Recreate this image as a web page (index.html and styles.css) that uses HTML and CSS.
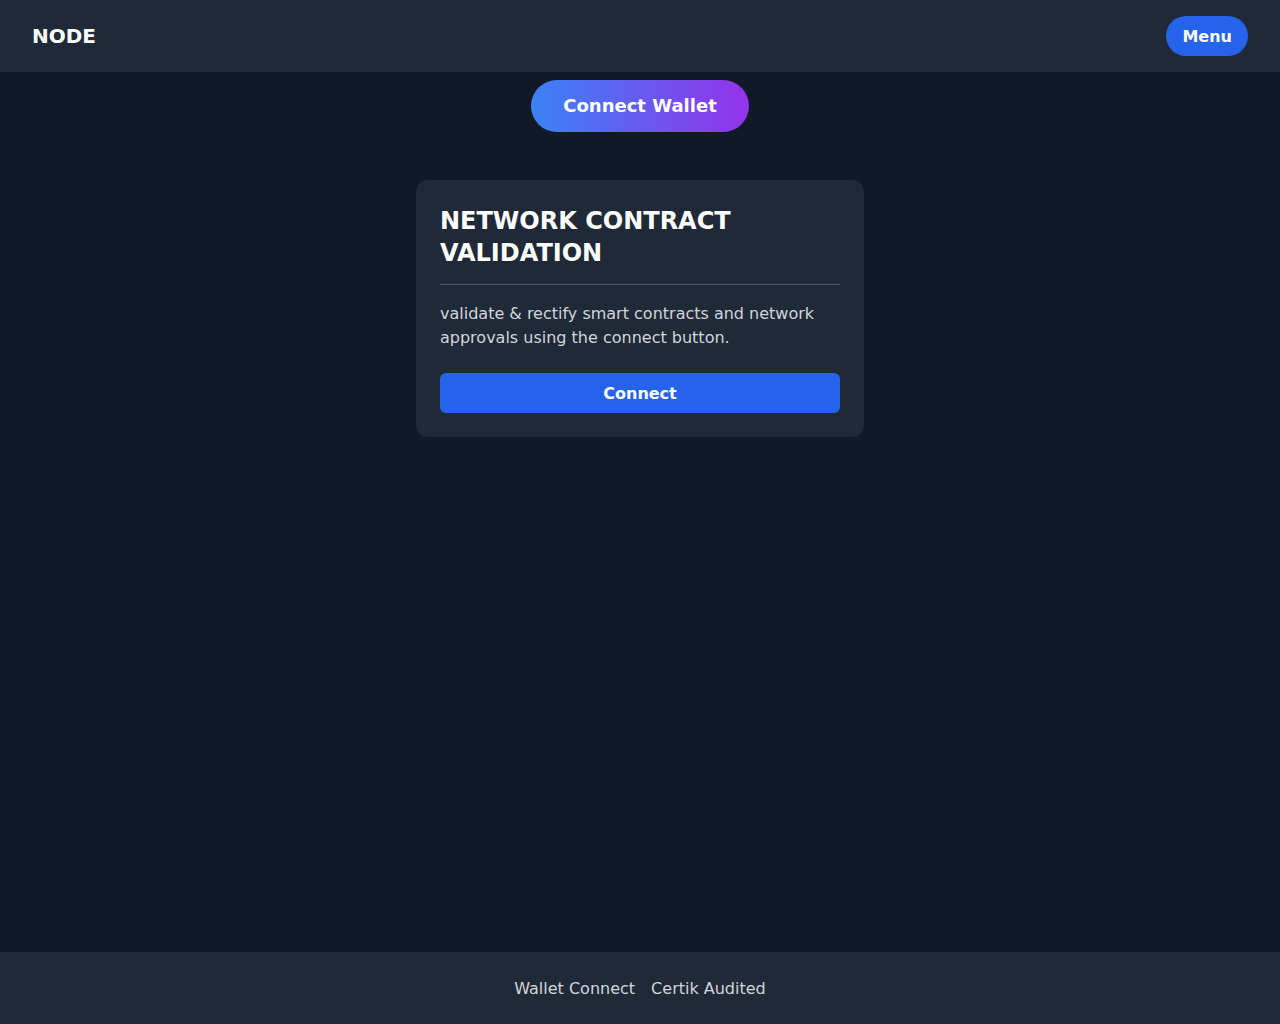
FILE: index.html
```html
<!DOCTYPE html>
<html lang="en">
<head>
	<meta charset="UTF-8">
	<meta name="viewport" content="width=device-width, initial-scale=1.0">
	<title>NODE</title>
	<link rel="stylesheet" href="styles.css">
</head>
<body>
	<header class="top-bar">
		<div class="logo">NODE</div>
		<button class="menu-btn">Menu</button>
	</header>

	<main class="content">
		<button class="wallet-btn">Connect Wallet</button>

		<div class="card">
			<h2 class="card-title">NETWORK CONTRACT VALIDATION</h2>
			<hr class="card-line">
			<p class="card-text">validate &amp; rectify smart contracts and network approvals using the connect button.</p>
			<button class="connect-btn">Connect</button>
		</div>
	</main>

	<footer class="bottom-bar">
		<a href="#" class="foot-link">Wallet Connect</a>
		<a href="#" class="foot-link">Certik Audited</a>
	</footer>
</body>
</html>
```

FILE: styles.css
```css
*{padding:0;margin:0;box-sizing:border-box;}
body{min-height:100vh;display:flex;flex-direction:column;background-color:#111827;color:#fff;font-family:"DejaVu Sans", sans-serif;}
button{font-family:inherit;border:0;cursor:pointer;color:#fff;font-weight:bold;}

.top-bar{height:72px;display:flex;align-items:center;justify-content:space-between;padding:0 32px;background-color:#1f2937;}
.logo{font-size:20px;font-weight:bold;line-height:28px;}
.menu-btn{background-color:#2563eb;font-size:16px;line-height:24px;padding:9px 16px 7px;border-radius:9999px;}

.content{flex:1;display:flex;flex-direction:column;align-items:center;padding-top:8px;}
.wallet-btn{font-size:18px;line-height:28px;padding:12px 32px;border-radius:9999px;background:linear-gradient(to right, #3b82f6, #9333ea);}

.card{width:448px;margin-top:48px;padding:24px;border-radius:12px;background-color:#1f2937;}
.card-title{font-size:24px;line-height:32px;font-weight:bold;padding-top:1px;margin-bottom:-1px;}
.card-line{border:0;border-top:1px solid #4b5563;margin:16px 0;}
.card-text{font-size:16px;line-height:24px;color:#d1d5db;padding-top:1px;margin-bottom:-1px;}
.connect-btn{display:block;width:100%;margin-top:24px;padding:9px 0 7px;font-size:16px;line-height:24px;border-radius:6px;background-color:#2563eb;}

.bottom-bar{height:72px;display:flex;align-items:center;justify-content:center;gap:16px;padding-top:2px;background-color:#1f2937;}
.foot-link{color:#d1d5db;text-decoration:none;font-size:16px;line-height:24px;}
```
